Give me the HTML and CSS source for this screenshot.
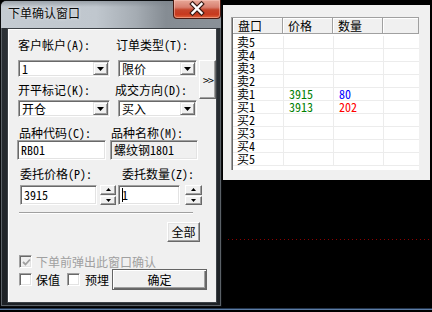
FILE: index.html
```html
<!DOCTYPE html>
<html>
<head>
<meta charset="utf-8">
<link rel="stylesheet" href="styles.css">
</head>
<body>
<div class="screen">
  <div class="main">
    <div class="win">
      <div class="titlebar">
        <span class="title">下单确认窗口</span>
        <div class="close">
          <svg width="48" height="19" viewBox="0 0 48 19">
            <path d="M19.5 5 L28.5 14 M28.5 5 L19.5 14" stroke="#3a1a14" stroke-width="4.6" stroke-linecap="square"/>
            <path d="M19.5 5 L28.5 14 M28.5 5 L19.5 14" stroke="#ffffff" stroke-width="2.4" stroke-linecap="square"/>
          </svg>
        </div>
      </div>
      <div class="client">
        <div class="top-grid">
          <span class="lbl la1">客户帐户(A):</span>
          <span class="lbl la2">订单类型(T):</span>
          <div class="combo ca1"><span class="val">1</span><span class="drop"><svg width="7" height="4" viewBox="0 0 7 4"><polygon points="0,0 7,0 3.5,4" fill="#000"/></svg></span></div>
          <div class="combo ca2"><span class="val">限价</span><span class="drop"><svg width="7" height="4" viewBox="0 0 7 4"><polygon points="0,0 7,0 3.5,4" fill="#000"/></svg></span></div>
          <div class="more">&gt;&gt;</div>
          <span class="lbl lb1">开平标记(K):</span>
          <span class="lbl lb2">成交方向(D):</span>
          <div class="combo cb1"><span class="val">开仓</span><span class="drop"><svg width="7" height="4" viewBox="0 0 7 4"><polygon points="0,0 7,0 3.5,4" fill="#000"/></svg></span></div>
          <div class="combo cb2"><span class="val">买入</span><span class="drop"><svg width="7" height="4" viewBox="0 0 7 4"><polygon points="0,0 7,0 3.5,4" fill="#000"/></svg></span></div>
        </div>

        <div class="code-grid">
          <span class="lbl lc1">品种代码(C):</span>
          <span class="lbl lc2">品种名称(M):</span>
          <div class="edit ec1">RB01</div>
          <div class="edit disabled ec2">螺纹钢1801</div>
        </div>

        <div class="order-grid">
          <span class="lbl ld1">委托价格(P):</span>
          <span class="lbl ld2">委托数量(Z):</span>
          <div class="edit ed1">3915</div>
          <div class="spin sp1">
            <span class="sbtn"><svg width="5" height="3" viewBox="0 0 5 3"><polygon points="2.5,0 5,3 0,3" fill="#000"/></svg></span>
            <span class="sbtn"><svg width="5" height="3" viewBox="0 0 5 3"><polygon points="0,0 5,0 2.5,3" fill="#000"/></svg></span>
          </div>
          <div class="edit ed2"><span class="caret"></span>1</div>
          <div class="spin sp2">
            <span class="sbtn"><svg width="5" height="3" viewBox="0 0 5 3"><polygon points="2.5,0 5,3 0,3" fill="#000"/></svg></span>
            <span class="sbtn"><svg width="5" height="3" viewBox="0 0 5 3"><polygon points="0,0 5,0 2.5,3" fill="#000"/></svg></span>
          </div>
        </div>

        <div class="sep"></div>

        <div class="btn all">全部</div>

        <div class="chk-row first">
          <span class="chk disabled"><svg width="9" height="9" viewBox="0 0 9 9"><path d="M1 4 L3.5 6.5 L8 1.5" stroke="#a0a0a0" stroke-width="1.8" fill="none"/></svg></span>
          <span class="chk-text gray">下单前弹出此窗口确认</span>
        </div>
        <div class="chk-row second">
          <span class="chk"></span>
          <span class="chk-text t1">保值</span>
          <span class="chk c2"></span>
          <span class="chk-text t2">预埋</span>
          <div class="btn ok">确定</div>
        </div>
      </div>
    </div>

    <div class="right">
      <div class="panel">
        <div class="book">
          <div class="bk-head"><span>盘口</span><span>价格</span><span>数量</span><span></span></div>
          <div class="bk-body">
            <div class="bk-row"><span>卖5</span><span></span><span></span><span></span></div>
            <div class="bk-row"><span>卖4</span><span></span><span></span><span></span></div>
            <div class="bk-row"><span>卖3</span><span></span><span></span><span></span></div>
            <div class="bk-row"><span>卖2</span><span></span><span></span><span></span></div>
            <div class="bk-row"><span>卖1</span><span class="px">3915</span><span class="qa">80</span><span></span></div>
            <div class="bk-row"><span>买1</span><span class="px">3913</span><span class="qb">202</span><span></span></div>
            <div class="bk-row"><span>买2</span><span></span><span></span><span></span></div>
            <div class="bk-row"><span>买3</span><span></span><span></span><span></span></div>
            <div class="bk-row"><span>买4</span><span></span><span></span><span></span></div>
            <div class="bk-row"><span>买5</span><span></span><span></span><span></span></div>
          </div>
        </div>
      </div>
      <div class="dotline"></div>
    </div>
  </div>
  <div class="taskline"></div>
</div>
</body>
</html>
```

FILE: styles.css
```css
* { box-sizing: border-box; margin: 0; padding: 0; }
html, body { width: 432px; height: 312px; overflow: hidden; background: #000; }
body {
  font-family: "Noto Sans Mono CJK SC", "Noto Sans CJK SC", "DejaVu Sans", sans-serif;
  font-size: 12px;
  line-height: 14px;
  color: #000;
}
.screen { width: 432px; height: 312px; display: flex; flex-direction: column; }
.main { display: flex; height: 308px; align-items: flex-start; }

/* ---------- window ---------- */
.win {
  width: 222px;
  height: 307px;
  border: 1px solid #0b0d0f;
  border-radius: 6px 6px 0 0;
  background:
    linear-gradient(180deg, rgba(0,0,0,0) 0, rgba(0,0,0,0) 27px, #2b3035 27px, #1d2125 100%);
  box-shadow: inset 0 0 0 1px #5b6167;
  display: flex;
  flex-direction: column;
  flex: none;
}
.titlebar {
  height: 27px;
  display: flex;
  justify-content: space-between;
  align-items: flex-start;
  padding-left: 7px;
  border-radius: 5px 5px 0 0;
  background:
    linear-gradient(180deg, rgba(120,128,136,0.55) 0, rgba(255,255,255,0) 6px),
    linear-gradient(90deg, #c4cbd2 0, #c0c7ce 95px, #a5acb3 135px, #858c93 165px, #8a9198 222px);
}
.title {
  margin-top: 5px;
  font-size: 12px;
  line-height: 14px;
  color: #0a0a0a;
  text-shadow: 0 0 3px rgba(255,255,255,0.8);
}
.close {
  width: 48px;
  height: 19px;
  margin-top: -1px;
  margin-right: 0;
  border: 1px solid #4a1a12;
  border-top: none;
  border-radius: 0 0 4px 4px;
  background: linear-gradient(180deg, #e8a898 0, #d88070 40%, #c5442a 55%, #c8391e 80%, #e0643c 100%);
  box-shadow: inset 0 0 0 1px rgba(255,210,200,0.45);
}
.close svg { display: block; margin-top: -1px; margin-left: -1px; }

.client {
  margin-left: 6px;
  width: 210px;
  height: 275px;
  background: #f0f0f0;
  border: 1px solid #3c4146;
  box-shadow: inset 1px 1px 0 #ffffff;
  display: flex;
  flex-direction: column;
}

.lbl { white-space: nowrap; line-height: 14px; }

/* row A/B */
.top-grid {
  display: grid;
  grid-template-columns: 92px 8px 79px 2px 17px;
  grid-template-rows: 22px 17px 23px 17px;
  padding-left: 10px;
  padding-top: 9px;
}
.la1 { grid-column: 1; grid-row: 1; }
.la2 { grid-column: 2 / 5; grid-row: 1; padding-left: 6px; }
.ca1 { grid-column: 1; grid-row: 2; }
.ca2 { grid-column: 3; grid-row: 2; }
.more { grid-column: 5; grid-row: 2 / 4; }
.lb1 { grid-column: 1; grid-row: 3; padding-top: 6px; }
.lb2 { grid-column: 2 / 5; grid-row: 3; padding-top: 6px; padding-left: 5px; }
.cb1 { grid-column: 1; grid-row: 4; }
.cb2 { grid-column: 3; grid-row: 4; }

.combo {
  height: 17px;
  background: #fff;
  border: 1px solid;
  border-color: #a0a0a0 #ffffff #ffffff #a0a0a0;
  box-shadow: inset 1px 1px 0 #696969, inset -1px -1px 0 #e3e3e3;
  display: flex;
  justify-content: space-between;
  padding: 1px 1px 1px 2px;
}
.combo .val { line-height: 14px; padding-left: 1px; }
.drop {
  width: 15px;
  height: 13px;
  background: #f0f0f0;
  border: 1px solid;
  border-color: #e3e3e3 #696969 #696969 #e3e3e3;
  box-shadow: inset 1px 1px 0 #fff, inset -1px -1px 0 #a0a0a0;
  display: flex;
  align-items: center;
  justify-content: center;
}
.drop svg { display: block; }

.more {
  height: 39px;
  background: #f0f0f0;
  border: 1px solid;
  border-color: #ffffff #696969 #696969 #ffffff;
  box-shadow: inset -1px -1px 0 #a0a0a0;
  display: flex;
  align-items: center;
  justify-content: center;
  font-size: 12px;
  line-height: 12px;
  letter-spacing: -1px;
  padding-left: 1px;
}

/* code row */
.code-grid {
  display: grid;
  grid-template-columns: 89px 4px 88px;
  grid-template-rows: 14px 20px;
  padding-left: 9px;
  margin-top: 9px;
}
.lc1 { grid-column: 1; grid-row: 1; padding-left: 2px; }
.lc2 { grid-column: 3; grid-row: 1; padding-left: 1px; }
.ec1 { grid-column: 1; grid-row: 2; }
.ec2 { grid-column: 3; grid-row: 2; }

.edit {
  height: 20px;
  background: #fff;
  border: 1px solid;
  border-color: #a0a0a0 #ffffff #ffffff #a0a0a0;
  box-shadow: inset 1px 1px 0 #696969, inset -1px -1px 0 #e3e3e3;
  padding: 2px 0 0 3px;
  line-height: 14px;
  white-space: nowrap;
  overflow: hidden;
}
.edit.disabled { background: #f0f0f0; }

/* order row */
.order-grid {
  display: grid;
  grid-template-columns: 77px 3px 16px 2px 62px 5px 17px;
  grid-template-rows: 14px 4px 20px;
  padding-left: 12px;
  margin-top: 7px;
}
.ld1 { grid-column: 1 / 4; grid-row: 1; }
.ld2 { grid-column: 5 / 8; grid-row: 1; padding-left: 4px; }
.ed1 { grid-column: 1; grid-row: 3; }
.sp1 { grid-column: 3; grid-row: 3; }
.ed2 { grid-column: 5; grid-row: 3; display: flex; }
.sp2 { grid-column: 7; grid-row: 3; }
.caret { width: 1px; height: 14px; background: #000; margin-right: -1px; }

.spin { display: flex; flex-direction: column; gap: 1px; height: 20px; }
.sbtn {
  flex: 1;
  background: #f0f0f0;
  border: 1px solid;
  border-color: #ffffff #696969 #696969 #ffffff;
  box-shadow: inset -1px -1px 0 #a0a0a0;
  display: flex;
  align-items: center;
  justify-content: center;
}
.sbtn svg { display: block; }

.sep {
  margin-top: 7px;
  margin-left: 11px;
  width: 174px;
  height: 2px;
  border-top: 1px solid #a0a0a0;
  border-bottom: 1px solid #ffffff;
}

.btn {
  background: #f0f0f0;
  border: 1px solid;
  border-color: #ffffff #696969 #696969 #ffffff;
  box-shadow: inset -1px -1px 0 #a0a0a0, inset 1px 1px 0 #e3e3e3;
  display: flex;
  align-items: center;
  justify-content: center;
  line-height: 14px;
}
.all {
  margin-top: 8px;
  margin-left: 159px;
  width: 33px;
  height: 20px;
  font-size: 12px;
}

.chk-row { display: flex; align-items: center; padding-left: 11px; }
.chk-row.first { margin-top: 13px; height: 13px; }
.chk-row.second { margin-top: 1px; height: 21px; }
.chk {
  width: 13px;
  height: 13px;
  flex: none;
  background: #fff;
  border: 1px solid;
  border-color: #a0a0a0 #ffffff #ffffff #a0a0a0;
  box-shadow: inset 1px 1px 0 #696969, inset -1px -1px 0 #e3e3e3;
  display: flex;
  align-items: center;
  justify-content: center;
}
.chk.disabled { background: #f0f0f0; }
.chk svg { display: block; margin: 1px 0 0 1px; }
.chk-text { margin-left: 4px; line-height: 13px; white-space: nowrap; }
.chk-text.gray { color: #a0a0a0; }
.chk.c2 { margin-left: 7px; }
.chk-text.t2 { margin-left: 5px; }
.ok {
  margin-left: 3px;
  width: 95px;
  height: 21px;
  border: 1px solid #646464;
  box-shadow: inset 1px 1px 0 #ffffff, inset -1px -1px 0 #696969, inset -2px -2px 0 #a0a0a0;
}

/* ---------- right order book ---------- */
.right { display: flex; flex-direction: column; width: 210px; }
.panel {
  margin-top: 5px;
  margin-left: 1px;
  width: 207px;
  height: 175px;
  background: #f0f0f0;
  padding: 12px 0 0 8px;
}
.book {
  width: 188px;
  height: 153px;
  background: #fff;
  border-top: 1px solid #a0a0a0;
  border-left: 1px solid #a0a0a0;
  padding-left: 1px;
  box-shadow: inset 1px 0 0 #696969;
}
.bk-head {
  display: grid;
  grid-template-columns: 50px 50px 50px 36px;
  height: 16px;
}
.bk-head span {
  background: #f0f0f0;
  border-right: 1px solid #a0a0a0;
  border-bottom: 1px solid #a0a0a0;
  box-shadow: inset 1px 1px 0 #ffffff;
  padding-left: 5px;
  line-height: 15px;
}
.bk-body { padding-top: 2px; }
.bk-row {
  display: grid;
  grid-template-columns: 50px 50px 50px 36px;
  height: 13px;
  border-bottom: 1px solid #ececec;
}
.bk-row span {
  line-height: 12px;
  padding-left: 4px;
  white-space: nowrap;
}
.bk-row span + span { border-left: 1px solid #ececec; padding-left: 5px; }
.px { color: #008000; }
.qa { color: #0000ff; }
.qb { color: #ff0000; }

.dotline {
  margin-top: 59px;
  margin-left: 6px;
  width: 204px;
  height: 1px;
  background: repeating-linear-gradient(90deg, #8c0000 0 1px, transparent 1px 4px);
}

.taskline {
  height: 2px;
  background: linear-gradient(180deg, #22344c 0 1px, #5c7ca4 1px 2px);
}
```
